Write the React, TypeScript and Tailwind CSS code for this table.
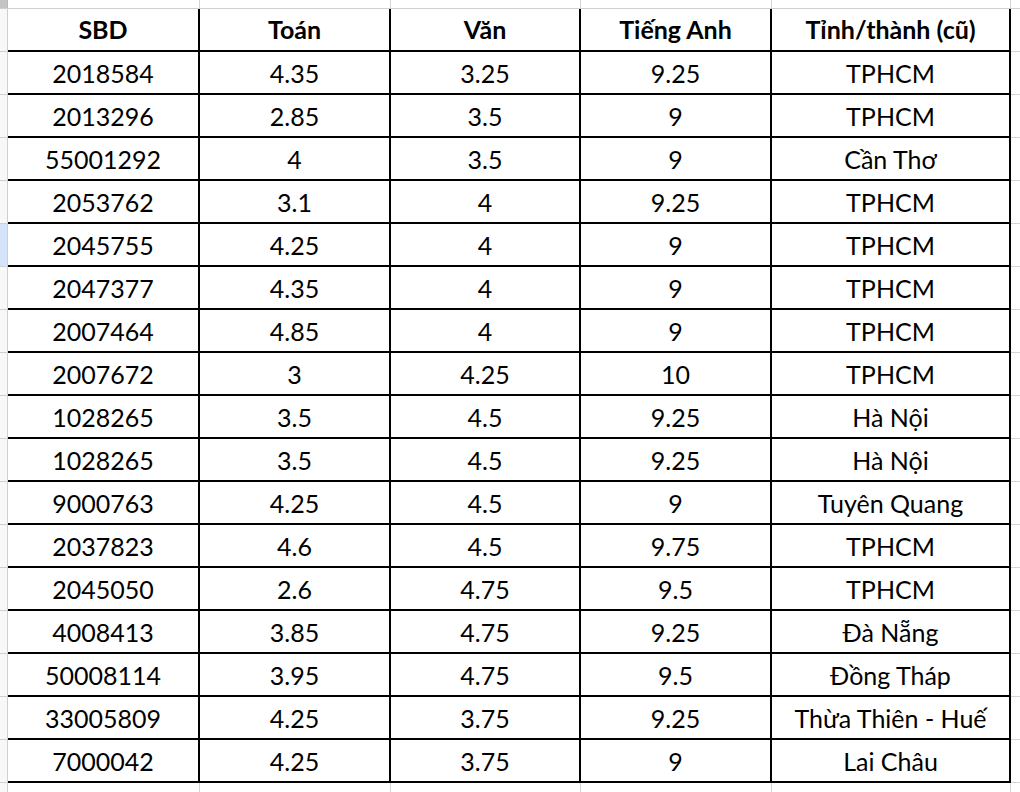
const rows: [string, string, string, string, string][] = [
  ["2018584", "4.35", "3.25", "9.25", "TPHCM"],
  ["2013296", "2.85", "3.5", "9", "TPHCM"],
  ["55001292", "4", "3.5", "9", "Cần Thơ"],
  ["2053762", "3.1", "4", "9.25", "TPHCM"],
  ["2045755", "4.25", "4", "9", "TPHCM"],
  ["2047377", "4.35", "4", "9", "TPHCM"],
  ["2007464", "4.85", "4", "9", "TPHCM"],
  ["2007672", "3", "4.25", "10", "TPHCM"],
  ["1028265", "3.5", "4.5", "9.25", "Hà Nội"],
  ["1028265", "3.5", "4.5", "9.25", "Hà Nội"],
  ["9000763", "4.25", "4.5", "9", "Tuyên Quang"],
  ["2037823", "4.6", "4.5", "9.75", "TPHCM"],
  ["2045050", "2.6", "4.75", "9.5", "TPHCM"],
  ["4008413", "3.85", "4.75", "9.25", "Đà Nẵng"],
  ["50008114", "3.95", "4.75", "9.5", "Đồng Tháp"],
  ["33005809", "4.25", "3.75", "9.25", "Thừa Thiên - Huế"],
  ["7000042", "4.25", "3.75", "9", "Lai Châu"],
];

const headers = ["SBD", "Toán", "Văn", "Tiếng Anh", "Tỉnh/thành (cũ)"];

// column widths incl. their right border
const colW = ["w-[192px]", "w-[191px]", "w-[190px]", "w-[191px]", "w-[239px]"];

function GridStrip({ height }: { height: string }) {
  // plain spreadsheet row with grey gridlines (above / below the table)
  return (
    <div className={`flex ${height}`}>
      <div className="w-[8px] shrink-0 bg-[#f8f8f8] border-r border-[#d0d0d0]" />
      {colW.map((w, i) => (
        <div key={i} className={`${w} shrink-0 border-r border-[#d4d4d4]`} />
      ))}
      <div className="flex-1" />
    </div>
  );
}

export default function App() {
  return (
    <div
      className="w-[1020px] h-[792px] overflow-hidden bg-white text-black"
      style={{ fontFamily: "Lato, 'Noto Sans', sans-serif" }}
    >
      {/* row above the table */}
      <div className="flex h-[9px] border-b border-[#d0d0d0]">
        <div className="w-[8px] shrink-0 bg-[#c4c4c4] border-r border-[#b8b8b8]" />
        {colW.map((w, i) => (
          <div key={i} className={`${w} shrink-0 border-r border-[#d4d4d4]`} />
        ))}
        <div className="flex-1" />
      </div>

      {/* header */}
      <div className="flex h-[43px]">
        <div className="w-[8px] shrink-0 bg-[#f8f8f8] border-r border-b border-[#d0d0d0]" />
        {headers.map((h, i) => (
          <div
            key={h}
            className={`${colW[i]} shrink-0 flex items-center justify-center border-r-2 border-b-2 border-black text-[25px] font-bold leading-none`}
          >
            {h}
          </div>
        ))}
        <div className="flex-1 border-b border-[#d4d4d4]" />
      </div>

      {/* data rows */}
      {rows.map((r, ri) => (
        <div key={ri} className="flex h-[43px]">
          <div
            className={`w-[8px] shrink-0 border-r border-b border-[#d0d0d0] ${
              ri === 4 ? "bg-[#d6e4fb]" : "bg-[#f8f8f8]"
            }`}
          />
          {r.map((v, ci) => (
            <div
              key={ci}
              className={`${colW[ci]} shrink-0 flex items-center justify-center border-r-2 border-b-2 border-black text-[25px] leading-none pt-[1px]`}
            >
              {v}
            </div>
          ))}
          <div className="flex-1 border-b border-[#d4d4d4]" />
        </div>
      ))}

      {/* row below */}
      <GridStrip height="h-[12px]" />
    </div>
  );
}
